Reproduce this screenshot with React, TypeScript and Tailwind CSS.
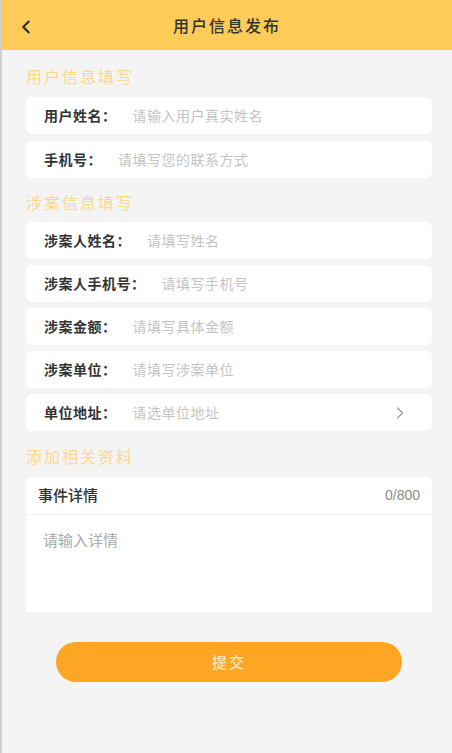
import { ChevronLeft, ChevronRight } from "lucide-react"

type Field = {
  label: string
  placeholder: string
  arrow?: boolean
}

const userFields: Field[] = [
  { label: "用户姓名：", placeholder: "请输入用户真实姓名" },
  { label: "手机号：", placeholder: "请填写您的联系方式" },
]

const caseFields: Field[] = [
  { label: "涉案人姓名：", placeholder: "请填写姓名" },
  { label: "涉案人手机号：", placeholder: "请填写手机号" },
  { label: "涉案金额：", placeholder: "请填写具体金额" },
  { label: "涉案单位：", placeholder: "请填写涉案单位" },
  { label: "单位地址：", placeholder: "请选单位地址", arrow: true },
]

function SectionTitle({ children }: { children: string }) {
  return (
    <h2 className="text-[16px] leading-[24px] tracking-[2px] text-[#fdd88a]">{children}</h2>
  )
}

function FieldRow({ field }: { field: Field }) {
  return (
    <div className="flex h-[37px] items-center rounded-[6px] bg-white pl-[18px] pr-[22px]">
      <span className="text-[14px] font-bold tracking-[0.5px] text-[#333333]">{field.label}</span>
      <span className="ml-[16px] flex-1 text-[14px] tracking-[0.5px] text-[#c4c4c4]">{field.placeholder}</span>
      {field.arrow && <ChevronRight className="size-[20px] text-[#9a9a9a]" strokeWidth={1.5} />}
    </div>
  )
}

export default function App() {
  return (
    <div
      className="min-h-[753px] border-l-2 border-[#cfcfcf] bg-[#f4f4f4]"
      style={{ fontFamily: '"Noto Sans CJK SC", "Noto Sans", sans-serif' }}
    >
      <header className="relative flex h-[50px] items-center justify-center bg-[#fdcb57]">
        <ChevronLeft className="absolute left-[13px] top-[16px] size-[22px] text-[#2a2a2a]" strokeWidth={2.25} />
        <h1 className="text-[16px] font-medium tracking-[2px] text-[#333333]">用户信息发布</h1>
      </header>

      <main className="pl-[24px] pr-[20px] pb-10">
        <div className="pt-[14px]">
          <SectionTitle>用户信息填写</SectionTitle>
        </div>
        <div className="mt-[9px] flex flex-col gap-[7px]">
          {userFields.map((field) => (
            <FieldRow key={field.label} field={field} />
          ))}
        </div>

        <div className="mt-[12px]">
          <SectionTitle>涉案信息填写</SectionTitle>
        </div>
        <div className="mt-[8px] flex flex-col gap-[6px]">
          {caseFields.map((field) => (
            <FieldRow key={field.label} field={field} />
          ))}
        </div>

        <div className="mt-[13px]">
          <SectionTitle>添加相关资料</SectionTitle>
        </div>
        <div className="mt-[9px] overflow-hidden rounded-t-[6px] bg-white">
          <div className="flex h-[38px] items-center justify-between border-b border-[#f1f1f1] pl-[12px] pr-[12px]">
            <span className="text-[15px] font-medium text-[#333333]">事件详情</span>
            <span
              className="text-[14px] text-[#8a8a8a]"
              style={{ fontFamily: '"Liberation Sans", sans-serif' }}
            >
              0/800
            </span>
          </div>
          <div className="h-[97px] pl-[17px] pt-[14px] text-[15px] leading-[22px] text-[#aaaaaa]">
            请输入详情
          </div>
        </div>

        <button className="mx-[30px] mt-[30px] flex h-[40px] w-[346px] items-center justify-center rounded-full bg-[#fca624] text-[15px] font-medium tracking-[2px] text-[#fde7b5]">
          提交
        </button>
      </main>
    </div>
  )
}
